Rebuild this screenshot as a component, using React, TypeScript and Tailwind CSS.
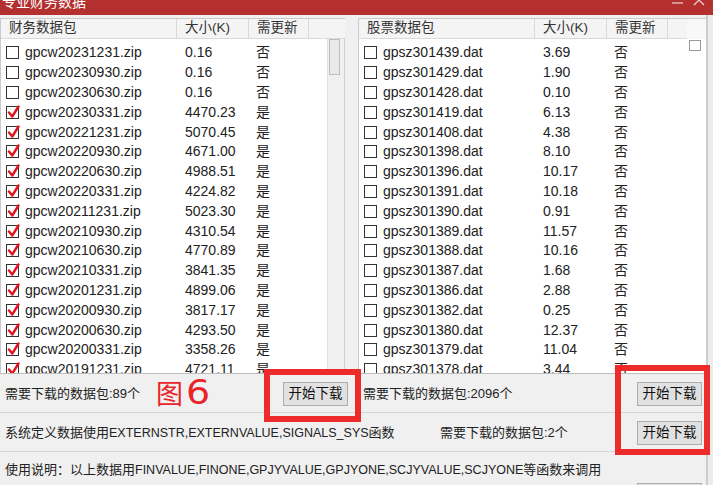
import React from 'react';

type Item = [string, string, boolean];

const finRows: Item[] = [
  ['gpcw20231231.zip', '0.16', false],
  ['gpcw20230930.zip', '0.16', false],
  ['gpcw20230630.zip', '0.16', false],
  ['gpcw20230331.zip', '4470.23', true],
  ['gpcw20221231.zip', '5070.45', true],
  ['gpcw20220930.zip', '4671.00', true],
  ['gpcw20220630.zip', '4988.51', true],
  ['gpcw20220331.zip', '4224.82', true],
  ['gpcw20211231.zip', '5023.30', true],
  ['gpcw20210930.zip', '4310.54', true],
  ['gpcw20210630.zip', '4770.89', true],
  ['gpcw20210331.zip', '3841.35', true],
  ['gpcw20201231.zip', '4899.06', true],
  ['gpcw20200930.zip', '3817.17', true],
  ['gpcw20200630.zip', '4293.50', true],
  ['gpcw20200331.zip', '3358.26', true],
  ['gpcw20191231.zip', '4721.11', true],
];

const stockRows: Item[] = [
  ['gpsz301439.dat', '3.69', false],
  ['gpsz301429.dat', '1.90', false],
  ['gpsz301428.dat', '0.10', false],
  ['gpsz301419.dat', '6.13', false],
  ['gpsz301408.dat', '4.38', false],
  ['gpsz301398.dat', '8.10', false],
  ['gpsz301396.dat', '10.17', false],
  ['gpsz301391.dat', '10.18', false],
  ['gpsz301390.dat', '0.91', false],
  ['gpsz301389.dat', '11.57', false],
  ['gpsz301388.dat', '10.16', false],
  ['gpsz301387.dat', '1.68', false],
  ['gpsz301386.dat', '2.88', false],
  ['gpsz301382.dat', '0.25', false],
  ['gpsz301380.dat', '12.37', false],
  ['gpsz301379.dat', '11.04', false],
  ['gpsz301378.dat', '3.44', false],
];

function CheckBox({ checked }: { checked: boolean }) {
  return (
    <div className="relative w-[13px] h-[13px] border border-[#333] bg-white">
      {checked && (
        <svg className="absolute left-[-1px] top-[-2px]" width="15" height="15" viewBox="0 0 15 15">
          <path d="M3 7.5 L6.3 11.5 L12.5 1.5" fill="none" stroke="#e0141c" strokeWidth="2.4" strokeLinecap="round" strokeLinejoin="round" />
        </svg>
      )}
    </div>
  );
}

function Row({ item }: { item: Item }) {
  const [name, size, checked] = item;
  return (
    <div className="flex items-center h-[19.8px] whitespace-nowrap text-[14px] text-[#222]">
      <div className="w-[24px] pl-[5px] shrink-0">
        <CheckBox checked={checked} />
      </div>
      <div className="w-[160px] shrink-0">{name}</div>
      <div className="w-[71px] shrink-0">{size}</div>
      <div>{checked ? '是' : '否'}</div>
    </div>
  );
}

function HeaderCell({ w, label }: { w: string; label?: string }) {
  return (
    <div className={`${w} shrink-0 h-full flex items-center pl-[8px] border-r border-[#d9d9d9] text-[13.5px] text-[#333] whitespace-nowrap`}>
      {label}
    </div>
  );
}

function WinButton({ className = '' }: { className?: string }) {
  return (
    <button className={`w-[65px] h-[24px] shrink-0 bg-[#e1e1e1] border border-[#adadad] text-[13.5px] text-[#111] leading-none ${className}`}>
      开始下载
    </button>
  );
}

export default function App() {
  return (
    <div className="relative w-[713px] h-[485px] overflow-hidden bg-[#f0f0f0] flex flex-col font-['Liberation_Sans','Noto_Sans_CJK_SC',sans-serif]">
      {/* title bar, cut off at the top */}
      <div className="h-[15px] shrink-0 bg-[#b3302f] flex items-start overflow-hidden">
        <div className="pl-[2px] mt-[-5px] text-[14px] leading-[14px] text-white">专业财务数据</div>
        <div className="ml-auto flex items-start gap-[10px] pr-[8px]">
          <svg width="11" height="6" viewBox="0 0 11 6">
            <path d="M0 3 H11" stroke="#f4d6d6" strokeWidth="1.2" />
          </svg>
          <svg width="12" height="7" viewBox="0 0 12 7">
            <path d="M1 -5 L11 5 M11 -5 L1 5" stroke="#f4d6d6" strokeWidth="1.2" />
          </svg>
        </div>
      </div>

      <div className="flex flex-1 min-h-0">
        <div className="w-[706px] shrink-0 flex flex-col">
          {/* lists */}
          <div className="h-[358px] shrink-0 flex pt-[3px]">
            {/* left: 财务数据包 */}
            <div className="w-[345px] shrink-0 flex flex-col border-l border-t border-[#c9c9c9]">
              <div className="h-[20px] shrink-0 flex bg-[#f4f4f4] border-b border-[#d9d9d9]">
                <HeaderCell w="w-[176px]" label="财务数据包" />
                <HeaderCell w="w-[72px]" label="大小(K)" />
                <HeaderCell w="w-[60px]" label="需更新" />
                <div className="flex-1" />
              </div>
              <div className="flex flex-1 min-h-0">
                <div className="w-[326px] shrink-0 bg-white overflow-hidden pt-[4px]">
                  {finRows.map((r) => (
                    <Row key={r[0]} item={r} />
                  ))}
                </div>
                <div className="flex-1 bg-[#f0f0f0] border-l border-[#e2e2e2] border-r border-r-[#cfcfcf]">
                  <div className="ml-[1px] w-[11px] h-[36px] bg-[#e9e9e9] border border-[#bdbdbd]" />
                </div>
              </div>
            </div>

            <div className="w-[13px] shrink-0" />

            {/* right: 股票数据包 */}
            <div className="relative w-[348px] shrink-0 flex flex-col border-l border-t border-[#c9c9c9]">
              <div className="h-[20px] shrink-0 flex">
                <div className="flex h-full bg-[#f4f4f4] border-b border-[#d9d9d9]">
                  <HeaderCell w="w-[176px]" label="股票数据包" />
                  <HeaderCell w="w-[72px]" label="大小(K)" />
                  <HeaderCell w="w-[61px]" label="需更新" />
                  <div className="w-[19px]" />
                </div>
                <div className="flex-1 bg-[#f8f8f8]" />
              </div>
              <div className="flex-1 min-h-0 bg-white overflow-hidden pt-[4px]">
                {stockRows.map((r) => (
                  <Row key={r[0]} item={r} />
                ))}
              </div>
              <div className="absolute right-[5px] top-[21px] w-[12px] h-[11px] border border-[#9a9a9a] bg-white" />
            </div>
          </div>

          {/* row 1 */}
          <div className="h-[40px] shrink-0 flex border-t border-[#bdbdbd] border-b border-b-[#d6d6d6]">
            <div className="w-[358px] shrink-0 flex items-center pl-[5px] pr-[10px] pt-[2px] text-[13px] text-[#222]">
              <span>需要下载的数据包:89个</span>
              <WinButton className="ml-auto" />
            </div>
            <div className="flex-1 flex items-center pl-[5px] pr-[4px] pt-[2px] text-[13px] text-[#222]">
              <span>需要下载的数据包:2096个</span>
              <WinButton className="ml-auto" />
            </div>
          </div>

          {/* row 2 */}
          <div className="h-[39px] shrink-0 flex items-center pl-[5px] pr-[4px] pt-[1px] border-b border-[#d6d6d6] text-[13px] text-[#222] whitespace-nowrap">
            <span className="w-[435px] shrink-0">
              系统定义数据使用<span className="text-[12.5px]">EXTERNSTR,EXTERNVALUE,SIGNALS_SYS</span>函数
            </span>
            <span>需要下载的数据包:2个</span>
            <WinButton className="ml-auto" />
          </div>

          {/* row 3 */}
          <div className="flex-1 flex flex-col pl-[5px] pr-[4px] pt-[10px] text-[13px] text-[#222] whitespace-nowrap">
            <span className="leading-[16px]">
              使用说明：以上数据用<span className="text-[12.5px]">FINVALUE,FINONE,GPJYVALUE,GPJYONE,SCJYVALUE,SCJYONE</span>等函数来调用
            </span>
            <div className="self-end mt-[5px] w-[65px] h-[24px] bg-[#e1e1e1] border border-[#adadad]" />
          </div>
        </div>

        {/* window frame */}
        <div className="flex-1 border-l-2 border-[#cdcdcd] bg-[#ececec]" />
      </div>

      {/* annotations */}
      <div className="absolute left-[156px] top-[379px] h-[27px] flex items-end text-[#e8242a] leading-[27px]">
        <span className="text-[27px] font-['Noto_Sans_CJK_SC']">图</span>
        <span className="text-[33px] ml-[3px] leading-[27px] font-['DejaVu_Sans'] scale-x-[1.15] origin-left">6</span>
      </div>
      <div className="absolute left-[264px] top-[369px] w-[97px] h-[53px] border-[6px] border-[#ee2b2b]" />
      <div className="absolute left-[615px] top-[365px] w-[95px] h-[90px] border-[6px] border-[#ee2b2b]" />
    </div>
  );
}
